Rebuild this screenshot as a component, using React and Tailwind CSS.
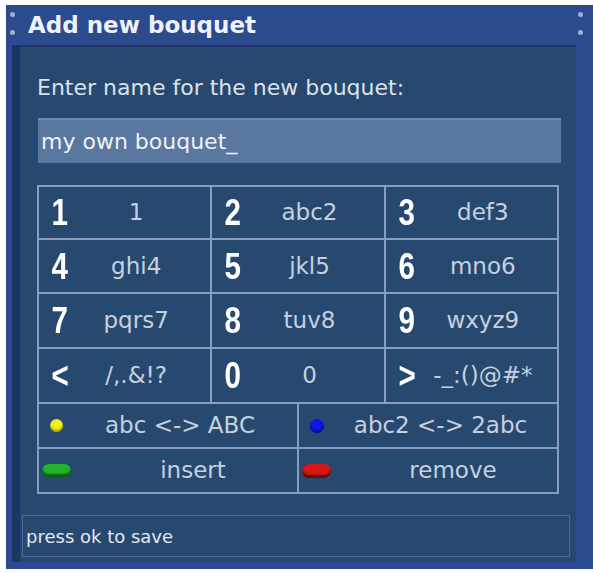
import React from "react";

const keys = [
  ["1", "1"], ["2", "abc2"], ["3", "def3"],
  ["4", "ghi4"], ["5", "jkl5"], ["6", "mno6"],
  ["7", "pqrs7"], ["8", "tuv8"], ["9", "wxyz9"],
  ["<", "/,.&!?"], ["0", "0"], [">", "-_:()@#*"],
];

const dv = { fontFamily: '"DejaVu Sans", sans-serif' };

export default function App() {
  return (
    <div className="w-[593px] h-[573px] bg-white pt-[5px] pl-[6px] pb-[4px]" style={dv}>
      <div className="h-full flex flex-col bg-[#2b4b8e]">
        {/* title bar */}
        <div className="relative h-[40px] shrink-0 flex items-center pl-[22px]">
          <div className="absolute left-[4px] top-[7px] w-[5px] h-[5px] rounded-full bg-[#9fb1cf] blur-[0.6px]" />
          <div className="absolute left-[4px] top-[25px] w-[5px] h-[5px] rounded-full bg-[#9fb1cf] blur-[0.6px]" />
          <div className="absolute right-[10px] top-[7px] w-[5px] h-[5px] rounded-full bg-[#9fb1cf] blur-[0.6px]" />
          <div className="absolute right-[10px] top-[25px] w-[5px] h-[5px] rounded-full bg-[#9fb1cf] blur-[0.6px]" />
          <span className="text-[23px] font-bold text-[#eef2fa] leading-none">Add new bouquet</span>
        </div>
        {/* body */}
        <div className="flex-1 flex pl-[6px] pr-[17px] pb-[7px]">
          <div className="flex-1 flex flex-col bg-[#27486f] border-l-[8px] border-t-[2px] border-[#1c3568]">
            <div className="mt-[28px] ml-[17px] h-[26px] leading-[26px] text-[22px] text-[#dbe2ec]">
              Enter name for the new bouquet:
            </div>
            <div className="mt-[17px] ml-[18px] w-[523px] h-[45px] bg-[#5a77a0] border-t-[2px] border-[#6e8ab2] flex items-center pl-[3px]">
              <span className="text-[22px] leading-[26px] text-[#eef2f8]">my own bouquet_</span>
            </div>
            {/* keypad */}
            <div className="mt-[22px] ml-[17px] w-[522px] h-[309px] flex flex-col gap-[2px] border-2 border-[#8a9dbd] bg-[#8a9dbd]">
              <div className="grid grid-cols-3 grid-rows-[51px_52px_53px_53px] gap-[2px]">
                {keys.map(([d, l], i) => (
                  <div key={i} className="bg-[#27496f] flex items-center pl-[11px]">
                    <span
                      className="inline-block w-[16px] text-center text-[37px] leading-none font-bold text-white scale-x-80"
                      style={{ fontFamily: '"Liberation Sans", sans-serif' }}
                    >
                      {d}
                    </span>
                    <span className="flex-1 text-center text-[23px] text-[#c6d0e0] pr-[4px]">{l}</span>
                  </div>
                ))}
              </div>
              <div className="flex-1 grid grid-cols-2 grid-rows-[43px_43px] gap-[2px]">
                <div className="bg-[#27496f] flex items-center pl-[11px]">
                  <span className="w-[13px] h-[13px] rounded-full bg-[#f2f01c] shadow-[inset_0_-2px_2px_rgba(120,110,0,0.6)]" />
                  <span className="flex-1 text-center text-[23px] text-[#c6d0e0]">abc &lt;-&gt; ABC</span>
                </div>
                <div className="bg-[#27496f] flex items-center pl-[11px]">
                  <span className="w-[14px] h-[14px] rounded-full bg-[#1414e6] shadow-[inset_0_-2px_2px_rgba(0,0,80,0.6)]" />
                  <span className="flex-1 text-center text-[23px] text-[#c6d0e0]">abc2 &lt;-&gt; 2abc</span>
                </div>
                <div className="bg-[#27496f] flex items-center pl-[3px]">
                  <span className="w-[29px] h-[13px] rounded-full bg-[#22b42c] shadow-[inset_0_-3px_2px_rgba(0,60,0,0.7)]" />
                  <span className="flex-1 text-center text-[23px] text-[#c6d0e0] pl-[18px]">insert</span>
                </div>
                <div className="bg-[#27496f] flex items-center pl-[3px]">
                  <span className="w-[29px] h-[14px] rounded-full bg-[#d41818] shadow-[inset_0_-3px_2px_rgba(60,0,0,0.7)]" />
                  <span className="flex-1 text-center text-[23px] text-[#c6d0e0] pl-[18px]">remove</span>
                </div>
              </div>
            </div>
            {/* status */}
            <div className="mt-[21px] ml-[2px] mr-[6px] h-[42px] border border-[#4868a0] bg-[#28496f] flex items-center pl-[3px]">
              <span className="text-[18px] text-[#e2e8f2]">press ok to save</span>
            </div>
          </div>
        </div>
      </div>
    </div>
  );
}
